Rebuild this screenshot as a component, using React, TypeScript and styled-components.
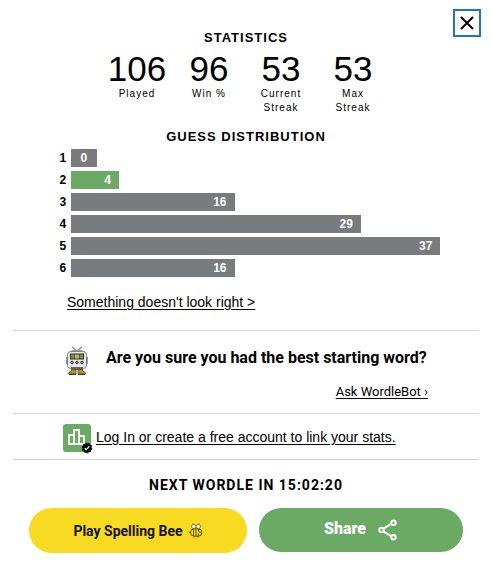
import React from "react";
import styled, { createGlobalStyle } from "styled-components";

const GlobalStyle = createGlobalStyle`
  *, *::before, *::after { box-sizing: border-box; }
  body {
    margin: 0;
    background: #fff;
    color: #000;
    font-family: "Liberation Sans", Arial, sans-serif;
    font-size: 14px;
  }
  h1, h2, p, dl, dd, ol { margin: 0; padding: 0; }
`;

const franklin = `Roboto, "Liberation Sans", sans-serif`;

const Modal = styled.main`
  position: relative;
  padding: 29px 13px 18px;
`;

const CloseButton = styled.button`
  position: absolute;
  top: 9px;
  right: 11px;
  width: 28px;
  height: 28px;
  padding: 0;
  display: grid;
  place-items: center;
  background: #fff;
  border: 2px solid #1f6fd6;
  cursor: pointer;
`;

const Heading = styled.h2`
  font-size: 13px;
  line-height: 18px;
  font-weight: 700;
  letter-spacing: 1px;
  text-align: center;
`;

const Stats = styled.dl`
  display: flex;
  justify-content: center;
  margin: 4px 0 13px;
  padding-right: 2px;
`;

const Stat = styled.div`
  width: 72px;
  display: flex;
  flex-direction: column-reverse;
  justify-content: flex-end;
  align-items: center;
  text-align: center;
`;

const StatValue = styled.dd`
  font-size: 35px;
  line-height: 36px;
`;

const StatLabel = styled.dt`
  width: 48px;
  font-size: 10px;
  line-height: 14px;
  letter-spacing: 1px;
`;

const Chart = styled.ol`
  width: 80%;
  margin: 3px auto 0;
  list-style: none;
  display: grid;
  gap: 4px;
`;

const Guess = styled.li`
  display: flex;
  gap: 5px;
  font-size: 12px;
  line-height: 18px;
  font-weight: 700;
`;

const Track = styled.div`
  flex: 1;
`;

const Bar = styled.div<{ $share: number; $current?: boolean }>`
  width: ${({ $share }) => ($share ? `calc(${$share}% + 8px)` : "7%")};
  padding-right: ${({ $share }) => ($share ? 8 : 0)}px;
  text-align: ${({ $share }) => ($share ? "right" : "center")};
  background: ${({ $current }) => ($current ? "#6aaa64" : "#787c7e")};
  color: #fff;
`;

const TextLink = styled.a`
  color: inherit;
  font-size: 14px;
  line-height: 18px;
  text-decoration: underline;
  text-underline-offset: 2px;
`;

const Report = styled.p`
  padding: 16px 54px 19px;
`;

const BotSection = styled.section`
  border-top: 1px solid #dcdcdc;
  padding: 14px 51px 12px 52px;
  display: grid;
  grid-template-columns: 24px 1fr;
  column-gap: 17px;
  row-gap: 6px;
  align-items: center;
`;

const BotTitle = styled.h2`
  font-family: ${franklin};
  font-size: 16px;
  line-height: 20px;
  font-weight: 700;
  margin-bottom: 6px;
`;

const BotLink = styled(TextLink)`
  grid-column: 1 / -1;
  justify-self: end;
  font-family: ${franklin};
  font-size: 13px;
`;

const Account = styled.section`
  border-top: 1px solid #dcdcdc;
  border-bottom: 1px solid #d3d3d3;
  padding: 10px 50px 5px;
  display: flex;
  align-items: flex-start;
  gap: 3px;
`;

const AccountLink = styled(TextLink)`
  line-height: 26px;
`;

const Countdown = styled(Heading)`
  margin: 16px 0 14px;
  font-family: ${franklin};
  font-size: 14px;
`;

const Actions = styled.div`
  display: flex;
  gap: 12px;
  padding: 0 16px;
`;

const Pill = styled.button<{ $tone: "bee" | "share" }>`
  flex: ${({ $tone }) => ($tone === "bee" ? 218 : 204)} 1 0;
  height: ${({ $tone }) => ($tone === "bee" ? 45 : 44)}px;
  display: flex;
  align-items: center;
  justify-content: center;
  gap: ${({ $tone }) => ($tone === "bee" ? 6 : 12)}px;
  padding: 0;
  border: 0;
  border-radius: 23px;
  background: ${({ $tone }) => ($tone === "bee" ? "#f8da22" : "#6aaa64")};
  color: ${({ $tone }) => ($tone === "bee" ? "#121212" : "#fff")};
  font-family: ${franklin};
  font-size: ${({ $tone }) => ($tone === "bee" ? 14 : 16)}px;
  font-weight: ${({ $tone }) => ($tone === "bee" ? 700 : 900)};
  cursor: pointer;
`;

const ShareLabel = styled.span`
  padding-bottom: 4px;
`;

const CloseIcon = () => (
  <svg width="14" height="14" viewBox="0 0 14 14" aria-hidden="true">
    <path d="M1 1l12 12M13 1L1 13" stroke="#000" strokeWidth="2" />
  </svg>
);

const BotIcon = () => (
  <svg width="24" height="32" viewBox="0 0 24 32" aria-hidden="true">
    <path d="M7 2l5 4 5-4" fill="none" stroke="#888" strokeWidth="1.2" />
    <path d="M7 5h10l2 2H5z" fill="#999" />
    <rect x="2.5" y="6.5" width="19" height="17" rx="3" fill="#e9e9e9" stroke="#888" />
    <path d="M2 12v7M22 12v7" stroke="#777" strokeWidth="1.5" />
    <rect x="5" y="8.5" width="14" height="6" fill="#333" />
    <rect x="6" y="9.5" width="3.5" height="4" fill="#5f9a59" />
    <rect x="10" y="9.5" width="4" height="4" fill="#dfb02c" />
    <rect x="14.5" y="9.5" width="3.5" height="4" fill="#5f9a59" />
    <g fill="#999" stroke="#333" strokeWidth="1">
      <circle cx="7" cy="17.5" r="1.3" />
      <circle cx="12" cy="17.5" r="1.3" />
      <circle cx="17" cy="17.5" r="1.3" />
    </g>
    <path d="M6 22h12v3H6z" fill="#666" />
    <path d="M6.5 24.5H11V29H3.5q0-2.5 3-3zM13 24.5h4.5V26q3 .5 3 3H13z" fill="#b6962b" stroke="#4a3c10" strokeWidth=".7" />
    <path d="M4 29.5h7M13 29.5h7" stroke="#333" strokeWidth="1" />
  </svg>
);

const StatsIcon = () => (
  <svg width="30" height="30" viewBox="0 0 30 30" aria-hidden="true">
    <rect width="28" height="28" rx="3" fill="#6aaa64" />
    <path d="M6 20V11h5V6h5v14M11 11v9M16 12h5v8M5 20h17" fill="none" stroke="#fff" strokeWidth="1.8" />
    <circle cx="24" cy="24" r="4.6" fill="#000" stroke="#000" strokeWidth="1.2" strokeDasharray="1.8 1" />
    <path d="M21.7 24.2l1.6 1.5 3-3.3" fill="none" stroke="#fff" strokeWidth="1.2" />
  </svg>
);

const BeeIcon = () => (
  <svg width="14" height="15" viewBox="0 0 14 15" aria-hidden="true">
    <path d="M5 1.5L4 .5M9 1.5l1-1" stroke="#121212" strokeWidth=".8" />
    <ellipse cx="4.7" cy="3.5" rx="2.3" ry="1.9" fill="#fff" stroke="#6b5d10" strokeWidth=".8" />
    <ellipse cx="9.3" cy="3.5" rx="2.3" ry="1.9" fill="#fff" stroke="#6b5d10" strokeWidth=".8" />
    <rect x="1.5" y="5.8" width="11.5" height="7.4" rx="3.7" fill="#f8da22" stroke="#4d430c" strokeWidth=".9" />
    <path d="M4.5 6v7M7 6v7.5M9.5 6v2.5M9.5 10.5V13M0 9.5h1.5M5 13.5v1M9 13.5v1" stroke="#4d430c" strokeWidth=".9" />
    <circle cx="11" cy="9" r=".6" fill="#121212" />
  </svg>
);

const ShareIcon = () => (
  <svg width="20" height="22" viewBox="0 0 20 22" aria-hidden="true">
    <g fill="none" stroke="#fff" strokeWidth="2">
      <path d="M5 9.8l8.2-4.9M5 12.2l8.2 4.9" />
      <circle cx="3.5" cy="11" r="2.2" />
      <circle cx="15.5" cy="3.8" r="2.2" />
      <circle cx="15.5" cy="18.2" r="2.2" />
    </g>
  </svg>
);

const stats = [
  { value: 106, label: "Played" },
  { value: 96, label: "Win %" },
  { value: 53, label: "Current Streak" },
  { value: 53, label: "Max Streak" },
];

const guesses = [0, 4, 16, 29, 37, 16];
const latestGuess = 2;
const most = Math.max(...guesses);

export default function App() {
  return (
    <>
      <GlobalStyle />
      <Modal>
        <CloseButton type="button" aria-label="Close">
          <CloseIcon />
        </CloseButton>
        <Heading>STATISTICS</Heading>
        <Stats>
          {stats.map(({ value, label }) => (
            <Stat key={label}>
              <StatLabel>{label}</StatLabel>
              <StatValue>{value}</StatValue>
            </Stat>
          ))}
        </Stats>
        <Heading>GUESS DISTRIBUTION</Heading>
        <Chart>
          {guesses.map((count, i) => (
            <Guess key={i}>
              <span>{i + 1}</span>
              <Track>
                <Bar $share={Math.round((count / most) * 100)} $current={i + 1 === latestGuess}>
                  {count}
                </Bar>
              </Track>
            </Guess>
          ))}
        </Chart>
        <Report>
          <TextLink href="#report">Something doesn't look right &gt;</TextLink>
        </Report>
        <BotSection>
          <BotIcon />
          <BotTitle>Are you sure you had the best starting word?</BotTitle>
          <BotLink href="#wordlebot">Ask WordleBot ›</BotLink>
        </BotSection>
        <Account>
          <StatsIcon />
          <AccountLink href="#login">Log In or create a free account to link your stats.</AccountLink>
        </Account>
        <Countdown>NEXT WORDLE IN 15:02:20</Countdown>
        <Actions>
          <Pill type="button" $tone="bee">
            Play Spelling Bee
            <BeeIcon />
          </Pill>
          <Pill type="button" $tone="share">
            <ShareLabel>Share</ShareLabel>
            <ShareIcon />
          </Pill>
        </Actions>
      </Modal>
    </>
  );
}
